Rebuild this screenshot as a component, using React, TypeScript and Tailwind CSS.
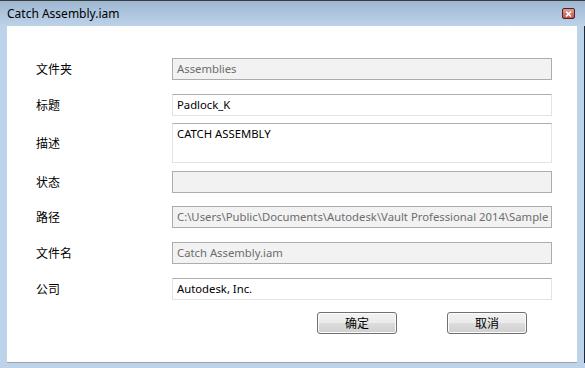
import React from "react";

const latin = "font-['Segoe_UI','Noto_Sans','Noto_Sans_CJK_SC',sans-serif]";

function Field({
  value,
  disabled,
  multi,
  className = "",
}: {
  value: string;
  disabled?: boolean;
  multi?: boolean;
  className?: string;
}) {
  const base = disabled
    ? "bg-[#f2f2f2] border border-[#adadad] text-[#6d6d6d]"
    : "bg-white border border-[#e2e3ea] border-t-[#abadb3] text-black";
  return (
    <div
      className={`w-[380px] ${multi ? "h-[40px] pt-[2px]" : "h-[22px] flex items-center"} ${base} pl-[4px] pr-[1px] overflow-hidden whitespace-nowrap text-[11.3px] leading-[16px] ${latin} ${className}`}
    >
      {value}
    </div>
  );
}

function Row({
  label,
  children,
  className = "",
}: {
  label: string;
  children: React.ReactNode;
  className?: string;
}) {
  return (
    <div className={`flex items-center ${className}`}>
      <div className="w-[136px] text-[12px] leading-[16px] text-black font-['Noto_Sans_CJK_SC',sans-serif]">
        {label}
      </div>
      {children}
    </div>
  );
}

function Btn({ label }: { label: string }) {
  return (
    <div className="w-[80px] h-[22px] rounded-[3px] border border-[#707070] bg-[linear-gradient(#f2f2f2_0%,#ebebeb_50%,#dddddd_50%,#cfcfcf_100%)] shadow-[inset_0_0_0_1px_#fcfcfc] flex items-center justify-center text-[12px] text-black font-['Noto_Sans_CJK_SC',sans-serif]">
      {label}
    </div>
  );
}

export default function App() {
  return (
    <div className="w-[585px] h-[368px] flex flex-col bg-[#bcd3ea] overflow-hidden">
      <div className="h-[26px] border-t border-[#3a3a3a] bg-[linear-gradient(#9eb7d1,#bcd2e9)] flex items-center pl-[7px] pr-[10px]">
        <div className={`flex-1 text-[12px] text-black ${latin}`}>Catch Assembly.iam</div>
        <div className="w-[13px] h-[11px] rounded-[2px] border border-[#4a2424] bg-[linear-gradient(#e29a92,#c5514a)] flex items-center justify-center">
          <svg width="7" height="6" viewBox="0 0 7 6">
            <path d="M1 0.5 L6 5.5 M6 0.5 L1 5.5" stroke="white" strokeWidth="1.6" />
          </svg>
        </div>
      </div>
      <div className="flex flex-1 pb-[5px]">
        <div className="w-[7px]" />
        <div className="w-[570px] bg-white border-b border-[#a0a0a0] flex flex-col pl-[29px] pt-[32px]">
          <Row label="文件夹">
            <Field value="Assemblies" disabled />
          </Row>
          <Row label="标题" className="mt-[14px]">
            <Field value="Padlock_K" />
          </Row>
          <Row label="描述" className="mt-[7px]">
            <Field value="CATCH ASSEMBLY" multi />
          </Row>
          <Row label="状态" className="mt-[8px]">
            <Field value="" disabled />
          </Row>
          <Row label="路径" className="mt-[13px]">
            <Field
              value="C:\Users\Public\Documents\Autodesk\Vault Professional 2014\Sample"
              disabled
            />
          </Row>
          <Row label="文件名" className="mt-[14px]">
            <Field value="Catch Assembly.iam" disabled />
          </Row>
          <Row label="公司" className="mt-[14px]">
            <Field value="Autodesk, Inc." />
          </Row>
          <div className="flex mt-[12px] pl-[281px] gap-[50px]">
            <Btn label="确定" />
            <Btn label="取消" />
          </div>
        </div>
        <div className="flex-1" />
        <div className="w-[1px] bg-[#1b2a3a]" />
      </div>
    </div>
  );
}
